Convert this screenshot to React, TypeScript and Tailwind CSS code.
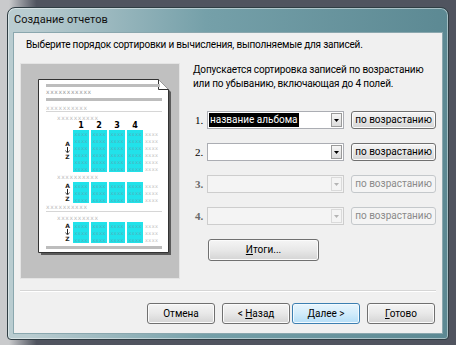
import React from 'react'

const ui = "font-['Roboto','Noto_Sans',sans-serif]"

function Arrow({ disabled }: { disabled?: boolean }) {
    return (
        <svg width="5" height="3" viewBox="0 0 5 3">
            <path d="M0 0 L5 0 L2.5 3 Z" fill={disabled ? '#b4b4b4' : '#000'} />
        </svg>
    )
}

function Combo({ value, disabled }: { value?: string; disabled?: boolean }) {
    return (
        <div
            className={
                'flex h-[18px] w-[137px] items-stretch border ' +
                (disabled ? 'border-[#cdcdcd] bg-[#f4f4f4]' : 'border-[#abadb3] bg-white')
            }
        >
            <div className="flex flex-1 items-center pl-[1px]">
                {value && (
                    <span className="bg-black px-[1px] text-[10px] leading-[14px] whitespace-nowrap text-white">{value}</span>
                )}
            </div>
            <div
                className={
                    'm-[1px] flex w-[11px] items-center justify-center border ' +
                    (disabled
                        ? 'border-[#dadada] bg-[#f4f4f4]'
                        : 'border-[#9a9a9a] bg-linear-to-b from-[#f6f6f6] to-[#dcdcdc]')
                }
            >
                <Arrow disabled={disabled} />
            </div>
        </div>
    )
}

function Button({
    children,
    className = '',
    primary,
    disabled,
}: {
    children: React.ReactNode
    className?: string
    primary?: boolean
    disabled?: boolean
}) {
    let look =
        'border-[#707070] bg-linear-to-b from-[#f5f5f5] via-[#e8e8e8] to-[#d4d4d4] text-black shadow-[inset_0_0_0_1px_#fbfbfb]'
    if (primary)
        look =
            'border-[#3c7fb1] bg-linear-to-b from-[#e8f5fd] via-[#d2ecfb] to-[#b4def7] text-black shadow-[inset_0_0_0_1px_#f2faff]'
    if (disabled) look = 'border-[#c4c8cb] bg-[#f4f4f4] text-[#8a8a8a]'
    return (
        <div
            className={
                'flex items-center justify-center rounded-[3px] border text-[10px] leading-none whitespace-nowrap ' +
                look +
                ' ' +
                className
            }
        >
            {children}
        </div>
    )
}

function SortRow({ n, value, disabled }: { n: number; value?: string; disabled?: boolean }) {
    return (
        <div className="flex items-center">
            <span
                className={
                    "w-[15px] pl-[3px] font-['Liberation_Serif',serif] text-[11px] " +
                    (disabled ? 'font-bold text-[#6a6a6a]' : 'text-black')
                }
            >
                {n}.
            </span>
            <Combo value={value} disabled={disabled} />
            <Button disabled={disabled} className="ml-[7px] h-[18px] w-[85px]">
                по возрастанию
            </Button>
        </div>
    )
}

const cols = [35, 53, 71, 89]

function SortIcon({ y }: { y: number }) {
    return (
        <g fontFamily="DejaVu Sans, sans-serif" fontWeight="bold" fontSize="6" fill="#222">
            <text x="29.5" y={y + 5} textAnchor="middle">A</text>
            <line x1="29.5" y1={y + 6} x2="29.5" y2={y + 11} stroke="#222" strokeWidth="1" />
            <path d={`M27.5 ${y + 9.5} L29.5 ${y + 12} L31.5 ${y + 9.5}`} fill="none" stroke="#222" strokeWidth="0.8" />
            <text x="29.5" y={y + 17.5} textAnchor="middle">Z</text>
        </g>
    )
}

function Group({ y, rows, iconY }: { y: number; rows: number; iconY: number }) {
    const list = Array.from({ length: rows }, (_, i) => i)
    return (
        <g>
            {cols.map((x) => (
                <g key={x}>
                    <rect x={x} y={y} width="16" height={rows * 7} fill="#21e2ea" />
                    {list.map((r) => (
                        <text
                            key={r}
                            x={x + 1.5}
                            y={y + r * 7 + 5.5}
                            fontSize="5"
                            textLength="13"
                            fill="#4fb3bd"
                            fontFamily="DejaVu Sans, sans-serif"
                        >
                            xxxx
                        </text>
                    ))}
                </g>
            ))}
            {list.map((r) => (
                <text
                    key={r}
                    x={107}
                    y={y + r * 7 + 5.5}
                    fontSize="5"
                    textLength="13"
                    fill="#c4c4c4"
                    fontFamily="DejaVu Sans, sans-serif"
                >
                    xxxx
                </text>
            ))}
            <SortIcon y={iconY} />
        </g>
    )
}

function Xs({ x, y, n, fill }: { x: number; y: number; n: number; fill: string }) {
    return (
        <text x={x} y={y} fontSize="6" textLength={n * 4.1} fill={fill} fontFamily="DejaVu Sans, sans-serif">
            {'x'.repeat(n)}
        </text>
    )
}

function Preview() {
    return (
        <div className="h-[216px] w-[163px] border border-[#e4e4e4] bg-[#c0c0c0] pl-[17px] pt-[15px]">
            <svg width="134" height="178" viewBox="0 0 134 178">
                <path d="M3 3 L123 3 L133 13 L133 176 L3 176 Z" fill="#5a5a5a" />
                <path d="M0.5 0.5 L120.5 0.5 L130.5 10.5 L130.5 173.5 L0.5 173.5 Z" fill="#fff" stroke="#333" />
                <path d="M120.5 0.5 L120.5 10.5 L130.5 10.5" fill="#fff" stroke="#333" />
                <rect x="8" y="5" width="114" height="3" fill="#bdbdbd" />
                <Xs x={8} y={15} n={11} fill="#9a9a9a" />
                <rect x="8" y="19" width="116" height="3" fill="#bdbdbd" />
                <Xs x={8} y={31} n={10} fill="#bdbdbd" />
                <rect x="8" y="32" width="116" height="1" fill="#d6d6d6" />
                <Xs x={19} y={41} n={10} fill="#bdbdbd" />
                <g fontFamily="DejaVu Sans, sans-serif" fontWeight="bold" fontSize="8" fill="#000" textAnchor="middle">
                    {cols.map((x, i) => (
                        <text key={x} x={x + 8} y={49}>
                            {i + 1}
                        </text>
                    ))}
                </g>
                <Group y={51} rows={6} iconY={62} />
                <Xs x={19} y={100} n={10} fill="#bdbdbd" />
                <Group y={103} rows={3} iconY={104} />
                <Xs x={8} y={130} n={10} fill="#bdbdbd" />
                <rect x="8" y="132" width="116" height="1" fill="#d6d6d6" />
                <Xs x={19} y={141} n={10} fill="#bdbdbd" />
                <Group y={143} rows={3} iconY={144} />
                <rect x="8" y="167" width="116" height="3" fill="#bdbdbd" />
            </svg>
        </div>
    )
}

export default function App() {
    return (
        <div className={'h-[345px] w-[456px] overflow-hidden bg-linear-to-r from-[#c9cacc] from-[2%] to-[#50545f] to-[8%] pl-[7px] pt-[7px] ' + ui}>
            <div className="flex h-[333px] w-[442px] flex-col rounded-t-[8px] rounded-b-[4px] border border-[#2f3d43] bg-linear-to-r from-[#b9ccd0] from-[5%] via-[#75a0a9] via-[45%] to-[#5c8993] px-[5px] pb-[5px] shadow-[inset_0_0_0_1px_rgba(255,255,255,0.45)]">
                <div className="flex h-[24px] items-center pl-[1px] text-[11px] text-[#111]">Создание отчетов</div>
                <div className="flex h-[302px] w-[430px] flex-col border border-[#8aa7ae] bg-[#f0f0f0] px-[6px] pt-[5px] text-black">
                    <p className="ml-[6px] h-[14px] text-[10px] leading-[14px] tracking-[-0.2px] whitespace-nowrap">
                        Выберите порядок сортировки и вычисления, выполняемые для записей.
                    </p>
                    <div className="mt-[11px] flex">
                        <Preview />
                        <div className="ml-[12px] flex flex-col">
                            <p className="pl-[1px] text-[10px] leading-[14px] tracking-[-0.15px] whitespace-nowrap">
                                Допускается сортировка записей по возрастанию
                                <br />
                                или по убыванию, включающая до 4 полей.
                            </p>
                            <div className="mt-[20px] flex flex-col gap-[14px]">
                                <SortRow n={1} value="название альбома" />
                                <SortRow n={2} />
                                <SortRow n={3} disabled />
                                <SortRow n={4} disabled />
                            </div>
                            <Button className="ml-[16px] mt-[14px] h-[22px] w-[111px]">
                                <span>
                                    <span className="underline">И</span>тоги...
                                </span>
                            </Button>
                        </div>
                    </div>
                    <div className="mt-[11px] h-[2px] border-t border-b border-t-[#d5d5d5] border-b-white" />
                    <div className="mt-[11px] flex justify-end pr-[1px]">
                        <Button className="h-[21px] w-[68px]">Отмена</Button>
                        <Button className="ml-[7px] h-[21px] w-[68px]">
                            <span>
                                &lt; <span className="underline">Н</span>азад
                            </span>
                        </Button>
                        <Button primary className="ml-[2px] h-[21px] w-[68px]">
                            <span>
                                <span className="underline">Д</span>алее &gt;
                            </span>
                        </Button>
                        <Button className="ml-[7px] h-[21px] w-[68px]">
                            <span>
                                <span className="underline">Г</span>отово
                            </span>
                        </Button>
                    </div>
                </div>
            </div>
        </div>
    )
}
